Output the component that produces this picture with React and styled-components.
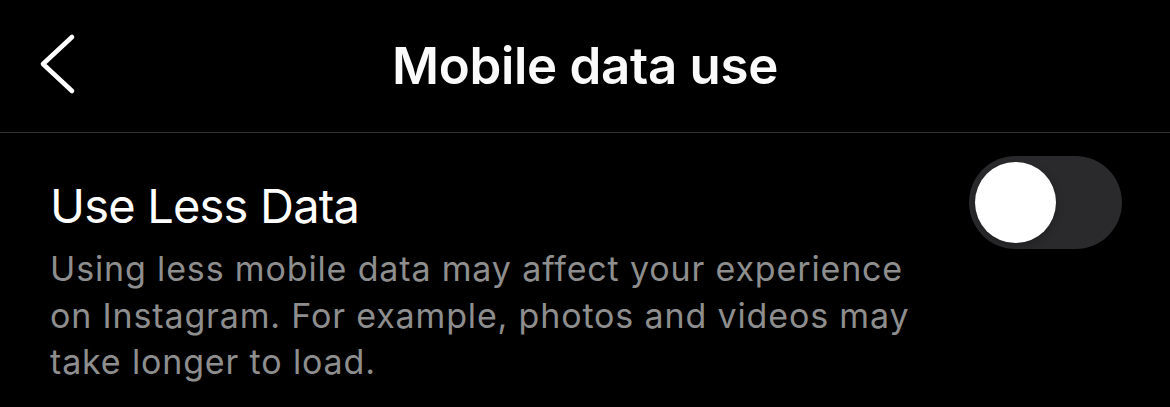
import React, { useState } from "react";
import styled, { createGlobalStyle } from "styled-components";

const GlobalStyle = createGlobalStyle`
  html, body {
    margin: 0;
    padding: 0;
    background: #000;
  }
  body {
    font-family: Inter, "Noto Sans", "Liberation Sans", sans-serif;
    -webkit-font-smoothing: antialiased;
  }
`;

const Page = styled.div`
  width: 1170px;
  height: 407px;
  background: #000;
  color: #fff;
  overflow: hidden;
`;

const Header = styled.header`
  height: 133px;
  display: grid;
  grid-template-columns: 1fr auto 1fr;
  align-items: center;
  border-bottom: 1px solid #333336;
  box-sizing: border-box;
`;

const BackButton = styled.button`
  justify-self: start;
  background: none;
  border: none;
  padding: 0 0 0 38px;
  margin-top: -4px;
  cursor: pointer;
  display: flex;
`;

const Title = styled.h1`
  margin: 0;
  font-size: 51px;
  font-weight: 600;
  letter-spacing: -0.3px;
  color: #fafafa;
  margin-top: -2px;
`;

const Content = styled.section`
  padding: 21px 48px 0 50px;
`;

const Row = styled.div`
  display: flex;
  justify-content: space-between;
  align-items: flex-start;
`;

const TextBlock = styled.div`
  display: flex;
  flex-direction: column;
  padding-top: 22px;
`;

const Label = styled.div`
  font-size: 47px;
  font-weight: 400;
  line-height: 60px;
  letter-spacing: -0.8px;
  color: #fff;
`;

const Description = styled.p`
  margin: 10px 0 0;
  font-size: 34px;
  line-height: 46.5px;
  letter-spacing: 0.85px;
  color: #8e8e8e;
`;

const Track = styled.button`
  width: 153px;
  height: 93px;
  border-radius: 47px;
  border: none;
  padding: 6px;
  margin-top: 2px;
  background: ${(p) => (p.$on ? "#34c759" : "#2a2a2d")};
  display: flex;
  justify-content: ${(p) => (p.$on ? "flex-end" : "flex-start")};
  align-items: center;
  cursor: pointer;
  box-sizing: border-box;
`;

const Knob = styled.span`
  width: 81px;
  height: 81px;
  border-radius: 50%;
  background: #fff;
  box-shadow: 0 3px 8px rgba(0, 0, 0, 0.25);
`;

export default function App() {
  const [lessData, setLessData] = useState(false);

  return (
    <Page>
      <GlobalStyle />
      <Header>
        <BackButton aria-label="Back">
          <svg width="40" height="64" viewBox="0 0 40 64" fill="none">
            <path
              d="M34 5 L5 32 L34 59"
              stroke="#fff"
              strokeWidth="4.6"
              strokeLinecap="round"
              strokeLinejoin="round"
            />
          </svg>
        </BackButton>
        <Title>Mobile data use</Title>
        <div />
      </Header>
      <Content>
        <Row>
          <TextBlock>
            <Label>Use Less Data</Label>
            <Description>
              Using less mobile data may affect your experience
              <br />
              on Instagram. For example, photos and videos may
              <br />
              take longer to load.
            </Description>
          </TextBlock>
          <Track $on={lessData} onClick={() => setLessData(!lessData)}>
            <Knob />
          </Track>
        </Row>
      </Content>
    </Page>
  );
}
